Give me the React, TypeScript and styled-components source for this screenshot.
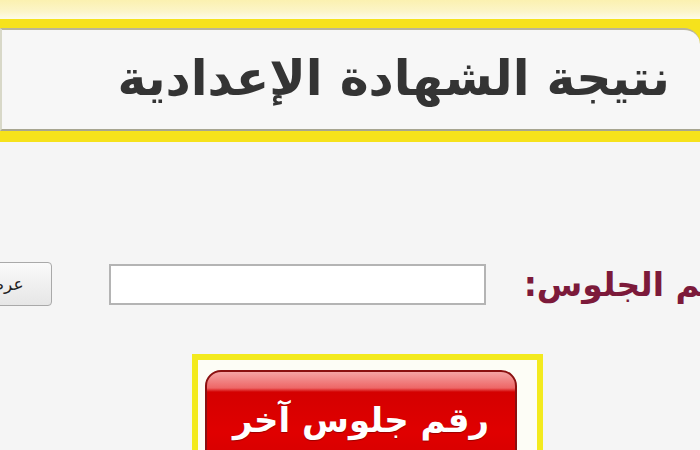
import React from 'react';
import styled, { createGlobalStyle } from 'styled-components';

const GlobalStyle = createGlobalStyle`
  html, body {
    margin: 0;
    padding: 0;
    width: 700px;
    height: 450px;
    overflow: hidden;
    background: #f5f5f5;
    font-family: "DejaVu Sans", "Noto Sans", sans-serif;
  }
`;

const Page = styled.div`
  width: 700px;
  height: 450px;
  overflow: hidden;
`;

const TopStrip = styled.div`
  height: 19px;
  background: linear-gradient(#fbf1b0 0%, #fcf5c8 60%, #fdfbe9 100%);
`;

const HeaderBand = styled.div`
  background: #f6e21c;
  padding: 9px 0 11px;
`;

const HeaderPanel = styled.div`
  height: 103px;
  background: #f7f7f7;
  border-top: 2px solid #b9b59a;
  border-bottom: 2px solid #a8a690;
  border-left: 2px solid #d8d8c8;
  border-radius: 0 16px 0 0;
  box-sizing: border-box;
  display: flex;
  align-items: center;
  justify-content: flex-end;
  padding: 0 30px 2px 0;
`;

const Title = styled.h1`
  margin: 0;
  direction: rtl;
  font-size: 49px;
  font-weight: bold;
  color: #343434;
  white-space: nowrap;
`;

const FormRow = styled.div`
  direction: rtl;
  display: flex;
  align-items: center;
  margin: 120px -42px 0 0;
  height: 44px;
`;

const Label = styled.label`
  font-size: 33px;
  font-weight: bold;
  color: #7c1a3a;
  white-space: nowrap;
  margin-left: 38px;
`;

const Field = styled.input`
  width: 377px;
  height: 41px;
  flex-shrink: 0;
  box-sizing: border-box;
  background: #fff;
  border: 2px solid #b4b4b4;
  margin-left: 57px;
`;

const ShowButton = styled.button`
  direction: rtl;
  width: 80px;
  height: 44px;
  flex-shrink: 0;
  border: 1px solid #a9a9a9;
  border-radius: 4px;
  background: linear-gradient(#fafafa, #e6e6e6);
  font-family: "DejaVu Sans", sans-serif;
  font-size: 17px;
  color: #222;
  padding: 0 27px 0 0;
  text-align: right;
  white-space: nowrap;
`;

const ButtonArea = styled.div`
  margin: 48px 0 0 192px;
`;

const ButtonFrame = styled.div`
  width: 351px;
  height: 120px;
  box-sizing: border-box;
  border: 6px solid #f3ea1e;
  background: #fdfdf6;
  padding: 10px 20px 0 7px;
`;

const RedButton = styled.button`
  width: 312px;
  height: 110px;
  border: 2px solid #8a1010;
  border-radius: 16px 16px 0 0;
  background: linear-gradient(#f4a4a4 0px, #e66 16px, #d40000 20px, #e00000 60px, #d00000 100%);
  color: #fff;
  font-family: "DejaVu Sans", sans-serif;
  font-weight: bold;
  font-size: 34px;
  direction: rtl;
  display: flex;
  justify-content: center;
  align-items: flex-start;
  padding-top: 28px;
  box-sizing: border-box;
  text-shadow: 0 1px 1px #900;
`;

export default function App() {
  return (
    <>
      <GlobalStyle />
      <Page>
        <TopStrip />
        <HeaderBand>
          <HeaderPanel>
            <Title>نتيجة الشهادة الإعدادية</Title>
          </HeaderPanel>
        </HeaderBand>
        <FormRow>
          <Label htmlFor="seat">رقم الجلوس:</Label>
          <Field id="seat" type="text" />
          <ShowButton>عرض</ShowButton>
        </FormRow>
        <ButtonArea>
          <ButtonFrame>
            <RedButton>رقم جلوس آخر</RedButton>
          </ButtonFrame>
        </ButtonArea>
      </Page>
    </>
  );
}
